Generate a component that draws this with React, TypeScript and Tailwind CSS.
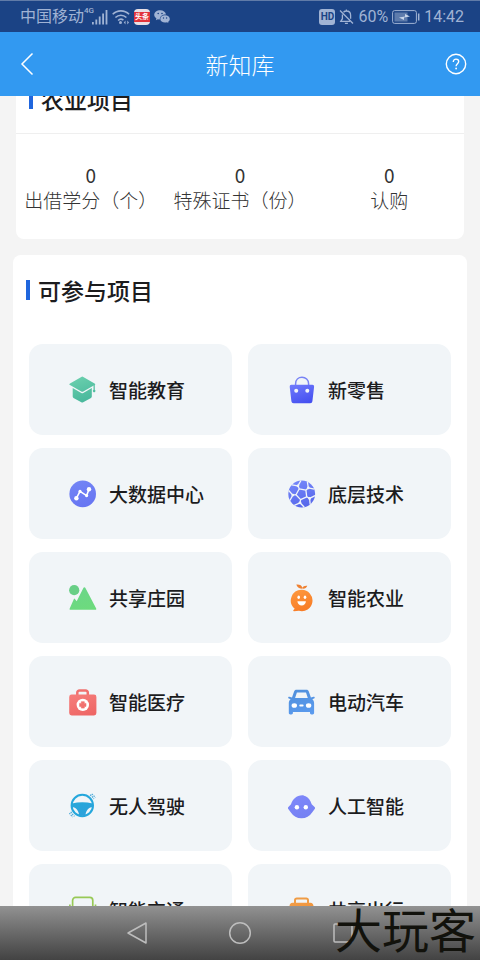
import type { ReactNode } from "react";

interface Project {
  name: string;
  icon: ReactNode;
}

interface Stat {
  label: string;
  value: number;
}

const stats: Stat[] = [
  { label: "出借学分（个）", value: 0 },
  { label: "特殊证书（份）", value: 0 },
  { label: "认购", value: 0 }
];

function Icon({ id, from, to, children }: { id: string; from: string; to: string; children: ReactNode }) {
  return (
    <svg viewBox="0 0 28 28" className="w-7 h-7 shrink-0" fill={`url(#${id})`} aria-hidden="true">
      <defs>
        <linearGradient id={id} gradientUnits="userSpaceOnUse" x1="8" y1="0" x2="18" y2="28">
          <stop stopColor={from} />
          <stop offset="1" stopColor={to} />
        </linearGradient>
      </defs>
      {children}
    </svg>
  );
}

const projects: Project[] = [
  {
    name: "智能教育",
    icon: (
      <Icon id="edu" from="#6bd0ae" to="#45b59a">
        <path d="M12.3.9a2 2 0 0 1 2 0L25.6 7.4a1 1 0 0 1 0 1.7L14.3 15.5a2 2 0 0 1-2 0L1 9.1a1 1 0 0 1 0-1.7z" />
        <path d="M3.700 12l8.600 4.900a2 2 0 0 0 2 0l8.500-4.900v8.600a1.500 1.500 0 0 1-.8 1.300l-7.800 4.400a2 2 0 0 1-1.900 0L4.500 21.900a1.500 1.500 0 0 1-.8-1.300z" />
        <path d="M24.5 8.5h1.300v5.200a1.300 1.300 0 1 1-1.300 0z" />
      </Icon>
    )
  },
  {
    name: "新零售",
    icon: (
      <Icon id="retail" from="#7c86ff" to="#444ff0">
        <path d="M7.600 9V7.800C7.600 3.800 10.400 1.300 14 1.300s6.600 2.500 6.600 6.500V9" fill="none" stroke="#7883f5" strokeWidth="1.500" />
        <path d="M3.400 8.800h21a1.700 1.700 0 0 1 1.700 1.900l-1.700 14.500a2.200 2.200 0 0 1-2.200 2H5.600a2.200 2.200 0 0 1-2.200-2L1.700 10.700a1.700 1.700 0 0 1 1.700-1.900z" />
        <circle cx="8.200" cy="14.800" r="2" fill="#f1f5f8" />
        <circle cx="19.300" cy="14.800" r="2" fill="#f1f5f8" />
      </Icon>
    )
  },
  {
    name: "大数据中心",
    icon: (
      <Icon id="data" from="#7385f5" to="#6674f2">
        <circle cx="13.700" cy="13.900" r="13.300" />
        <path d="M7.400 18.200L11 11.400l6.600 4.200L20 9.200" fill="none" stroke="#fff" strokeWidth="1.600" strokeLinejoin="round" />
        <g fill="#fff">
          <circle cx="7.400" cy="18.200" r="2.200" />
          <circle cx="11" cy="11.400" r="1.600" />
          <circle cx="17.600" cy="15.600" r="1.600" />
          <circle cx="20" cy="9.200" r="2.200" />
        </g>
      </Icon>
    )
  },
  {
    name: "底层技术",
    icon: (
      <Icon id="tech" from="#7688fa" to="#5565ea">
        <circle cx="13.700" cy="14" r="13.400" />
        <g fill="none" stroke="#f1f5f8" strokeWidth="1.300" strokeLinejoin="round">
          <path d="M11.300 8.800l6.600 1.300.8 6.700-6.100 2.800L8 14.700z" />
          <path d="M11.300 8.800L9.900 5.800M17.900 10.100l2.400-2.200M18.700 16.800l2.900 1.600M12.600 19.600l-.6 3.200M8 14.700l-3.200.4" />
          <path d="M3.800 4.800l6.100 1L13 .5M19.400 1.800l.9 6.100 6 1.300M27.100 15.600l-5.500 2.800.6 6.100M16.300 27.300L12 22.800l-5.700 2.500M1.900 20.500l2.900-5.400L.7 10.500" />
        </g>
        <g fill="#f1f5f8">
          <circle cx="9.900" cy="5.800" r="1.400" />
          <circle cx="20.300" cy="7.900" r="1.400" />
          <circle cx="21.600" cy="18.400" r="1.400" />
          <circle cx="12" cy="22.800" r="1.400" />
          <circle cx="4.800" cy="15.100" r="1.400" />
        </g>
      </Icon>
    )
  },
  {
    name: "共享庄园",
    icon: (
      <Icon id="manor" from="#6bd58b" to="#6ddb7c">
        <circle cx="5.200" cy="6.200" r="5.100" fill="#68cf86" />
        <path d="M14.500 3.800a1 1 0 0 1 1.800 0L27.200 24.600a.8.800 0 0 1-.7 1.200H1.200a.7.700 0 0 1-.6-1L4.900 15a.6.600 0 0 1 1-.1l1.800 2.300z" />
      </Icon>
    )
  },
  {
    name: "智能农业",
    icon: (
      <Icon id="farm" from="#ff9e43" to="#f77a25">
        <path d="M13.700 5.800a10.700 10.700 0 1 1-2.800 21l-4.800.5c-.8.100-1.200-.8-.6-1.300l1.200-1.300A10.700 10.700 0 0 1 13.700 5.800z" />
        <path d="M8.300.6c3.400-.3 5.400.8 6 3.100.8-1.500 2.500-2.300 5-2-1 2.300-2.500 3.300-5 2.900-2.900.4-5-1-6-4z" fill="#ef8131" />
        <ellipse cx="10.700" cy="13.200" rx="1.300" ry="1.800" fill="#fff" />
        <ellipse cx="17" cy="13.200" rx="1.300" ry="1.800" fill="#fff" />
        <path d="M9.400 17.300h8.500c-.2 2.700-1.800 4.200-4.200 4.200s-4.100-1.500-4.300-4.200z" fill="#fff" />
      </Icon>
    )
  },
  {
    name: "智能医疗",
    icon: (
      <Icon id="medical" from="#f7827f" to="#ee6665">
        <path d="M8.300 8V4.600a2.200 2.200 0 0 1 2.200-2.200h6.100a2.200 2.200 0 0 1 2.200 2.200V8" fill="none" stroke="#f0716f" strokeWidth="2.500" />
        <rect x=".2" y="6.500" width="27.200" height="21" rx="2.400" />
        <circle cx="13.800" cy="16.900" r="6.200" fill="#fff" />
        <path d="M12.300 13.700h3v1.700H17v3h-1.700v1.700h-3v-1.700h-1.700v-3h1.700z" strokeLinejoin="round" stroke="#f0716f" strokeWidth=".6" />
      </Icon>
    )
  },
  {
    name: "电动汽车",
    icon: (
      <Icon id="car" from="#4f8fdb" to="#5b9bef">
        <path
          fillRule="evenodd"
          d="M8.500 1.800h9.900c1.200 0 2 .6 2.400 1.700L22.900 9.500l2.600-.8c1.300-.3 1.700 1.500.5 1.900l-1.700.6c1.200 1 1.800 2.300 1.800 4v9.900c0 .9-.6 1.400-1.500 1.400h-1.100c-.9 0-1.500-.5-1.500-1.400V24H4.900v1.100c0 .9-.6 1.400-1.500 1.400H2.300c-.9 0-1.500-.5-1.500-1.400v-9.900c0-1.700.6-3 1.800-4L.9 10.600c-1.200-.4-.8-2.200.5-1.900L4 9.500l2.100-6c.4-1.100 1.200-1.700 2.400-1.700zM8.900 4.400L7.100 9.900h12.700L18 4.400z"
        />
        <ellipse cx="6.300" cy="17.500" rx="2.700" ry="2.300" fill="#fff" />
        <ellipse cx="20.600" cy="17.500" rx="2.700" ry="2.300" fill="#fff" />
        <rect x="11.300" y="16.600" width="4.300" height="1.900" rx=".9" fill="#fff" />
      </Icon>
    )
  },
  {
    name: "无人驾驶",
    icon: (
      <Icon id="drive" from="#23acd9" to="#2f9edb">
        <circle cx="13.300" cy="13.500" r="10.700" fill="none" stroke="#25a7dc" strokeWidth="2" />
        <path d="M3 11.500c6.600-1.700 14-1.700 20.600 0v3.400c-4.100.1-6.600 3.300-7.200 8.800h-6.200C9.600 18.200 7.100 15 3 14.900z" />
        <g fill="none" stroke="#48a8d8" strokeWidth="1.200" strokeDasharray="1.500 1">
          <path d="M21 2.800c1.600 1 2.900 2.500 3.700 4.300M22.700 1.900c1.600 1 2.700 2.400 3.500 4.100M1.900 19.700c.8 1.900 2 3.400 3.600 4.500M.5 20.900c.8 1.700 1.900 3.100 3.400 4.100" />
        </g>
      </Icon>
    )
  },
  {
    name: "人工智能",
    icon: (
      <Icon id="ai" from="#7f88fb" to="#7480f2">
        <path d="M14.300 3.200c1.400 0 2.200.7 3.300 1 2.900 1.300 4.800 4 6.100 8.100l2.900 2.700c.6.600.6 1.300.1 1.900l-2.600 3.500c-2.500 3.900-6 5.800-10.600 5.800S5.400 24.300 2.900 20.400L.3 16.900c-.5-.6-.5-1.300.1-1.900L3 12.300c1.500-5 5.500-9.100 11.300-9.100z" />
        <circle cx="8.900" cy="15.200" r="2.200" fill="#fff" />
        <circle cx="17.800" cy="15.200" r="2.200" fill="#fff" />
      </Icon>
    )
  },
  {
    name: "智能交通",
    icon: (
      <Icon id="traffic" from="#9ccb5a" to="#8bc34a">
        <g fill="none" stroke="#98c956" strokeWidth="1.700">
          <rect x="3.600" y="1.400" width="20.200" height="21.600" rx="3" />
          <path d="M.9 8.500v6M26.500 8.500v6M3.600 15h20.200M7 23v3.500M20.500 23v3.500" />
        </g>
      </Icon>
    )
  },
  {
    name: "共享出行",
    icon: (
      <Icon id="travel" from="#f2a04c" to="#ee8a2e">
        <path d="M7 8V4.200A1.700 1.700 0 0 1 8.700 2.500h9.600A1.700 1.700 0 0 1 20 4.200V8" fill="none" stroke="#f09c45" strokeWidth="2" />
        <path d="M4.500 6.800h18c1.900 0 3 1.500 3 3.400v13.300c0 1.700-1.100 3-2.800 3H4.300c-1.700 0-2.800-1.300-2.800-3V10.200c0-1.900 1.100-3.400 3-3.400z" />
      </Icon>
    )
  }
];

function StatusBar() {
  return (
    <div className="h-8 shrink-0 bg-[#1b4385] border-t border-[#607ba8] text-[#a0b3d4] flex items-center justify-between pl-5 pr-4 font-['Roboto','Noto_Sans_CJK_SC',sans-serif]">
      <div className="flex items-center">
        <span className="text-base leading-6">中国移动</span>
        <span className="w-2 text-[8px] leading-3 font-medium self-start">4G</span>
        <svg viewBox="0 0 16 15" className="w-4 h-4" fill="currentColor" aria-hidden="true">
          <path d="M0 12.500h1.800V15H0zM3.400 10h1.800v5H3.400zM6.800 7h1.800v8H6.800zM10.200 4H12v11h-1.800zM13.600.5h1.800V15h-1.800z" />
        </svg>
        <svg viewBox="0 0 18 15" className="w-[18px] h-4 ml-1" fill="none" stroke="currentColor" strokeWidth="1.600" aria-hidden="true">
          <path d="M.7 4.800c4.700-4.600 11.700-4.600 16.400 0M3.400 8c3.200-3.100 7.800-3.100 11 0M6.100 11c1.600-1.500 3.700-1.600 5.300-.3" />
          <circle cx="8.500" cy="13" r="1.500" fill="currentColor" stroke="none" />
          <path d="M13.500 11l-1.700 2 1.700 2zM15.300 11l1.700 2-1.700 2z" fill="currentColor" stroke="none" />
        </svg>
        <span className="ml-1 w-4 h-4 rounded-sm bg-[#e9e0e5] flex items-center">
          <span className="w-4 h-2.5 bg-[#e2333b] text-white text-[7px] leading-[10px] font-bold text-center whitespace-nowrap">头条</span>
        </span>
        <svg viewBox="0 0 16 13" className="w-4 h-[13px] ml-1" fill="currentColor" aria-hidden="true">
          <path d="M6.200.2c3 0 5.400 1.800 5.800 4.300-3.500-.1-6.300 1.800-6.200 5-.7 0-1.300 0-1.900-.3l-2 1 .5-1.800C1 7.500.2 6.200.2 4.800.2 2.200 2.900.2 6.200.2z" />
          <path d="M11 5.300c2.700 0 4.800 1.600 4.800 3.700 0 1.200-.7 2.200-1.700 2.900l.3 1.100-1.400-.7c-.6.200-1.300.3-2 .3-2.600 0-4.700-1.600-4.700-3.600s2.100-3.700 4.700-3.700z" />
          <g fill="#1b4385">
            <circle cx="4.200" cy="3.500" r=".8" />
            <circle cx="8" cy="3.500" r=".8" />
            <circle cx="9.500" cy="8" r=".7" />
            <circle cx="12.600" cy="8" r=".7" />
          </g>
        </svg>
      </div>
      <div className="flex items-center gap-1">
        <span className="w-4 h-4 rounded-[3px] bg-[#a0b3d4] text-[#1b4385] text-[10px] leading-4 font-bold text-center">HD</span>
        <svg viewBox="0 0 15 16" className="w-[15px] h-4" fill="none" stroke="currentColor" strokeWidth="1.300" aria-hidden="true">
          <path d="M1 1.500l13 13M4.500 3.300C5.300 2.500 6.300 2 7.400 2c2.500 0 4.200 1.800 4.200 4.300v3.500M3.400 5.500v4.200L1.800 12.300H11M5.900 14.300h3M7.400 2V.5" />
        </svg>
        <span className="text-base leading-6">60%</span>
        <svg viewBox="0 0 28 14" className="w-7 h-3.5" fill="none" stroke="currentColor" aria-hidden="true">
          <rect x=".6" y=".6" width="23.800" height="12.800" rx="2" />
          <rect x="2.500" y="2.500" width="13" height="9" fill="currentColor" fillOpacity=".5" stroke="none" />
          <path d="M7 7.500l6-1V4l5 2.500-6 1V10z" fill="#c9d6ea" stroke="none" />
          <path d="M26.700 3.500v7" strokeWidth="1.500" />
        </svg>
        <span className="text-base leading-6">14:42</span>
      </div>
    </div>
  );
}

function SectionTitle({ children }: { children: ReactNode }) {
  return (
    <h2 className="flex items-center gap-2 text-[23px] leading-6 font-medium text-[#1c1c1e]">
      <span className="w-1 h-5 bg-[#2066dd]" />
      {children}
    </h2>
  );
}

function NavBar() {
  return (
    <nav className="relative h-[54px] shrink-0 bg-linear-to-b from-[#929292] to-[#434343] px-[86px] flex text-[#bdbdbd]">
      <button aria-label="返回" className="flex-1 flex items-center justify-center">
        <svg viewBox="0 0 22 24" className="w-[22px] h-6" fill="none" stroke="currentColor" strokeWidth="1.500" strokeLinejoin="round">
          <path d="M20 2v20L2 12z" />
        </svg>
      </button>
      <button aria-label="主页" className="flex-1 flex items-center justify-center">
        <svg viewBox="0 0 24 24" className="w-6 h-6" fill="none" stroke="currentColor" strokeWidth="1.500">
          <circle cx="12" cy="12" r="10.300" />
        </svg>
      </button>
      <button aria-label="最近任务" className="flex-1 flex items-center justify-center">
        <svg viewBox="0 0 20 20" className="w-5 h-5" fill="none" stroke="currentColor" strokeWidth="1.500">
          <rect x="1" y="1" width="18" height="18" rx="1" />
        </svg>
      </button>
      <span className="absolute right-1 bottom-2 text-[47px] leading-[48px] text-[#12120c] pointer-events-none">大玩客</span>
    </nav>
  );
}

export default function App() {
  return (
    <div className="h-screen flex flex-col overflow-hidden bg-[#f4f4f4] font-['Noto_Sans_CJK_SC',sans-serif]">
      <StatusBar />

      <header className="h-16 shrink-0 bg-[#3299f1] text-white flex items-center justify-between px-3">
        <button aria-label="返回" className="w-6 flex justify-end">
          <svg viewBox="0 0 16 24" className="w-4 h-6" fill="none" stroke="currentColor" strokeWidth="1.500">
            <path d="M12.500 1.500L2 12l10.500 10.500" />
          </svg>
        </button>
        <h1 className="text-[23px] leading-8 font-light">新知库</h1>
        <button aria-label="帮助" className="w-6">
          <svg viewBox="0 0 24 24" className="w-6 h-6" fill="none" stroke="currentColor" strokeWidth="1.400">
            <circle cx="12" cy="12" r="9.700" />
            <path d="M9.300 10c0-1.800 1.100-2.900 2.700-2.900s2.700 1 2.700 2.500c0 2-2.600 2.200-2.600 4.600" />
            <circle cx="12.100" cy="16.500" r=".9" fill="currentColor" stroke="none" />
          </svg>
        </button>
      </header>

      <main className="flex-1 min-h-0 overflow-hidden">
        <section className="-mt-8 mx-4 pt-[23px] pb-[26px] bg-white rounded-lg">
          <div className="px-[13px] pb-[22px] border-b border-[#efefef]">
            <SectionTitle>农业项目</SectionTitle>
          </div>
          <dl className="mt-[29px] grid grid-cols-3 text-center text-[#333]">
            {stats.map(stat => (
              <div key={stat.label} className="flex flex-col-reverse">
                <dt className="text-[19px] leading-[26px] font-light whitespace-nowrap">{stat.label}</dt>
                <dd className="text-[19px] leading-6">{stat.value}</dd>
              </div>
            ))}
          </dl>
        </section>

        <section className="mt-4 mx-[13px] pt-[23px] pb-4 bg-white rounded-lg">
          <div className="px-[13px]">
            <SectionTitle>可参与项目</SectionTitle>
          </div>
          <div className="mt-[42px] px-4 grid grid-cols-2 gap-x-4 gap-y-[13px]">
            {projects.map(project => (
              <button
                key={project.name}
                className="h-[91px] pl-10 flex items-center gap-3 rounded-[14px] bg-[#f1f5f8] text-[19px] leading-6 font-medium text-[#1c1c1e] text-left"
              >
                {project.icon}
                {project.name}
              </button>
            ))}
          </div>
        </section>
      </main>

      <NavBar />
    </div>
  );
}
